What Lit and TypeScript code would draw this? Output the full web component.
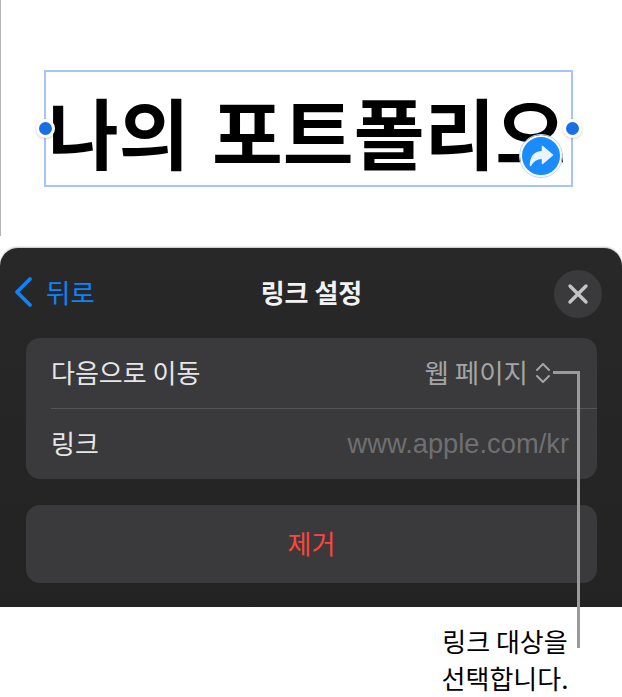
import { LitElement, html, css } from "lit";
import { customElement } from "lit/decorators.js";

@customElement("app-root")
export class AppRoot extends LitElement {
  static styles = css`
    :host {
      display: block;
      position: relative;
      width: 622px;
      height: 697px;
      overflow: hidden;
      background: #fff;
      font-family: "Noto Sans CJK KR", "Liberation Sans", sans-serif;
    }
    .canvas {
      height: 248px;
      box-sizing: border-box;
      padding: 70px 0 0 44px;
      background: linear-gradient(#b4b4b4, #b4b4b4) left top / 1px 236px no-repeat;
    }
    .selection {
      position: relative;
      width: 529px;
      height: 117px;
      box-sizing: border-box;
      border: 2px solid #a6c4fb;
      display: flex;
      align-items: center;
      justify-content: center;
    }
    .title {
      font-size: 77px;
      line-height: 1;
      font-weight: 700;
      color: #000;
      white-space: nowrap;
      word-spacing: 5px;
      margin: 4px 0 0 -3px;
    }
    .handle {
      position: absolute;
      top: 50%;
      width: 13px;
      height: 13px;
      margin-top: -9.5px;
      border-radius: 50%;
      background: #1a6fe6;
      border: 3px solid #fff;
      box-shadow: 0 1px 3px rgba(0, 0, 0, 0.18);
    }
    .handle.l { left: -10.5px; }
    .handle.r { right: -10.5px; }
    .badge {
      position: absolute;
      left: 474px;
      top: 63px;
      width: 38px;
      height: 38px;
      border-radius: 50%;
      background: #1a8cff;
      border: 2px solid #fff;
      outline: 1px solid #bcd6f5;
      display: flex;
      align-items: center;
      justify-content: center;
    }
    .sheet {
      height: 359px;
      box-sizing: border-box;
      background: linear-gradient(#282828, #232323);
      border-radius: 18px 18px 0 0;
      box-shadow: 0 -1px 2px rgba(0, 0, 0, 0.25);
      padding: 0 25px 0 26px;
      color: #fff;
    }
    .header {
      height: 90px;
      display: grid;
      grid-template-columns: 1fr auto 1fr;
      align-items: center;
    }
    .back {
      display: flex;
      align-items: center;
      gap: 12px;
      margin-left: -13px;
      color: #0a84ff;
      font-size: 26.5px;
      line-height: 34px;
      transform: translateY(-1px);
    }
    .heading {
      font-size: 26px;
      font-weight: 700;
      line-height: 34px;
      color: #f2f2f2;
      transform: translateY(-1px);
    }
    .close {
      justify-self: end;
      width: 48px;
      height: 48px;
      margin: 2px -5px 0 0;
      border-radius: 50%;
      background: #3a3a3c;
      display: flex;
      align-items: center;
      justify-content: center;
    }
    .group {
      background: #3a3a3c;
      border-radius: 14px;
      height: 141px;
      display: flex;
      flex-direction: column;
    }
    .row {
      flex: 1;
      display: flex;
      align-items: center;
      justify-content: space-between;
      padding: 0 28px 0 25px;
      font-size: 26px;
      line-height: 34px;
      color: #e6e6e6;
    }
    .row > span:first-child {
      transform: translateY(-1px);
    }
    .divider {
      height: 1px;
      margin-left: 25px;
      background: #545456;
    }
    .value {
      display: flex;
      align-items: center;
      gap: 7px;
      color: #a4a4a6;
      margin-right: 18px;
      font-size: 26.5px;
    }
    .value > span {
      transform: translateY(-1px);
    }
    .placeholder {
      color: #6f6f72;
      font-family: "Liberation Sans", sans-serif;
      font-size: 27.3px;
    }
    .remove {
      margin-top: 26px;
      height: 78px;
      border-radius: 14px;
      background: #3a3a3c;
      color: #ff453a;
      font-size: 26px;
      line-height: 34px;
      display: flex;
      align-items: center;
      justify-content: center;
    }
    .remove span {
      transform: translateY(-1px);
    }
    .caption {
      width: 150px;
      margin: 15px 0 0 430px;
      text-align: center;
      font-size: 26px;
      line-height: 37px;
      color: #000;
    }
    .leader {
      position: absolute;
      left: 553px;
      top: 371px;
      width: 27px;
      height: 277px;
      border-top: 3px solid #9a9a9a;
      border-right: 3px solid #9a9a9a;
      box-sizing: border-box;
    }
  `;

  render() {
    return html`
      <div class="canvas">
        <div class="selection">
          <span class="title">나의 포트폴리오</span>
          <span class="handle l"></span>
          <span class="handle r"></span>
          <span class="badge">
            <svg width="26" height="24" viewBox="0 0 26 24">
              <path d="M14.5 2.5 L24.5 11 L14.5 19.5 V14.3 C9.5 14 5.5 16 2.5 21.5 C2.5 13.5 6.5 8 14.5 7.5 Z" fill="#eaf3ff" stroke="#eaf3ff" stroke-width="1.5" stroke-linejoin="round"/>
            </svg>
          </span>
        </div>
      </div>
      <div class="sheet">
        <div class="header">
          <div class="back">
            <svg width="21" height="32" viewBox="0 0 21 32">
              <path d="M17 3 L4 16 L17 29" fill="none" stroke="#0a84ff" stroke-width="3.8" stroke-linecap="round" stroke-linejoin="round"/>
            </svg>
            <span>뒤로</span>
          </div>
          <div class="heading">링크 설정</div>
          <div class="close">
            <svg width="22" height="22" viewBox="0 0 22 22">
              <path d="M3 3 L19 19 M19 3 L3 19" stroke="#c4c4c6" stroke-width="3.4" stroke-linecap="round"/>
            </svg>
          </div>
        </div>
        <div class="group">
          <div class="row">
            <span>다음으로 이동</span>
            <span class="value">
              <span>웹 페이지</span>
              <svg width="16" height="24" viewBox="0 0 16 24">
                <path d="M2 9 L8 3 L14 9 M2 15 L8 21 L14 15" fill="none" stroke="#a4a4a6" stroke-width="2" stroke-linecap="round" stroke-linejoin="round"/>
              </svg>
            </span>
          </div>
          <div class="divider"></div>
          <div class="row">
            <span>링크</span>
            <span class="placeholder">www.apple.com/kr</span>
          </div>
        </div>
        <div class="remove"><span>제거</span></div>
      </div>
      <div class="caption">링크 대상을<br />선택합니다.</div>
      <div class="leader"></div>
    `;
  }
}
